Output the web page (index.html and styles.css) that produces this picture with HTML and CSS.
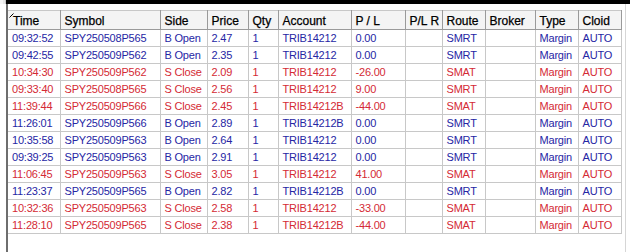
FILE: index.html
```html
<!DOCTYPE html>
<html>
<head>
<meta charset="utf-8">
<link rel="stylesheet" href="styles.css">
</head>
<body>
<div class="topbar"><div class="corner"></div><div class="blackbar"></div></div>
<div class="main">
  <div class="gutter"></div>
  <div class="pane">
    <table class="orders">
      <colgroup>
        <col style="width:52px"><col style="width:100px"><col style="width:47px"><col style="width:41px"><col style="width:30px"><col style="width:73px"><col style="width:54px"><col style="width:37px"><col style="width:43px"><col style="width:50px"><col style="width:43px"><col style="width:43px">
      </colgroup>
      <thead>
        <tr>
          <th class="first"><svg class="mark" width="5" height="5" viewBox="0 0 5 5"><line x1="0.5" y1="4.5" x2="4.5" y2="0.5" stroke="#000" stroke-width="1"/></svg>Time</th>
          <th>Symbol</th><th>Side</th><th>Price</th><th>Qty</th><th>Account</th><th>P / L</th><th>P/L R</th><th>Route</th><th>Broker</th><th>Type</th><th>Cloid</th>
        </tr>
      </thead>
      <tbody>
        <tr class="buy"><td>09:32:52</td><td>SPY250508P565</td><td>B Open</td><td>2.47</td><td>1</td><td>TRIB14212</td><td>0.00</td><td></td><td>SMRT</td><td></td><td>Margin</td><td>AUTO</td></tr>
        <tr class="buy"><td>09:42:55</td><td>SPY250509P562</td><td>B Open</td><td>2.35</td><td>1</td><td>TRIB14212</td><td>0.00</td><td></td><td>SMRT</td><td></td><td>Margin</td><td>AUTO</td></tr>
        <tr class="sell"><td>10:34:30</td><td>SPY250509P562</td><td>S Close</td><td>2.09</td><td>1</td><td>TRIB14212</td><td>-26.00</td><td></td><td>SMAT</td><td></td><td>Margin</td><td>AUTO</td></tr>
        <tr class="sell"><td>09:33:40</td><td>SPY250508P565</td><td>S Close</td><td>2.56</td><td>1</td><td>TRIB14212</td><td>9.00</td><td></td><td>SMRT</td><td></td><td>Margin</td><td>AUTO</td></tr>
        <tr class="sell"><td>11:39:44</td><td>SPY250509P566</td><td>S Close</td><td>2.45</td><td>1</td><td>TRIB14212B</td><td>-44.00</td><td></td><td>SMAT</td><td></td><td>Margin</td><td>AUTO</td></tr>
        <tr class="buy"><td>11:26:01</td><td>SPY250509P566</td><td>B Open</td><td>2.89</td><td>1</td><td>TRIB14212B</td><td>0.00</td><td></td><td>SMRT</td><td></td><td>Margin</td><td>AUTO</td></tr>
        <tr class="buy"><td>10:35:58</td><td>SPY250509P563</td><td>B Open</td><td>2.64</td><td>1</td><td>TRIB14212</td><td>0.00</td><td></td><td>SMRT</td><td></td><td>Margin</td><td>AUTO</td></tr>
        <tr class="buy"><td>09:39:25</td><td>SPY250509P563</td><td>B Open</td><td>2.91</td><td>1</td><td>TRIB14212</td><td>0.00</td><td></td><td>SMRT</td><td></td><td>Margin</td><td>AUTO</td></tr>
        <tr class="sell"><td>11:06:45</td><td>SPY250509P563</td><td>S Close</td><td>3.05</td><td>1</td><td>TRIB14212</td><td>41.00</td><td></td><td>SMAT</td><td></td><td>Margin</td><td>AUTO</td></tr>
        <tr class="buy"><td>11:23:37</td><td>SPY250509P565</td><td>B Open</td><td>2.82</td><td>1</td><td>TRIB14212B</td><td>0.00</td><td></td><td>SMRT</td><td></td><td>Margin</td><td>AUTO</td></tr>
        <tr class="sell"><td>10:32:36</td><td>SPY250509P563</td><td>S Close</td><td>2.58</td><td>1</td><td>TRIB14212</td><td>-33.00</td><td></td><td>SMAT</td><td></td><td>Margin</td><td>AUTO</td></tr>
        <tr class="sell"><td>11:28:10</td><td>SPY250509P565</td><td>S Close</td><td>2.38</td><td>1</td><td>TRIB14212B</td><td>-44.00</td><td></td><td>SMAT</td><td></td><td>Margin</td><td>AUTO</td></tr>
      </tbody>
    </table>
  </div>
  <div class="rightedge"></div>
</div>
</body>
</html>
```
FILE: styles.css
```css
html, body {
  margin: 0;
  padding: 0;
  background: #ffffff;
  width: 630px;
  height: 252px;
  overflow: hidden;
}
.topbar {
  display: flex;
  height: 4px;
}
.corner {
  width: 6px;
  background: #e6e6e6;
  box-sizing: border-box;
  border-left: 3px solid #f4f4f4;
  border-right: 1px solid #c8c8c8;
}
.blackbar {
  flex: 1;
  background: #000000;
}
.main {
  display: flex;
  height: 248px;
}
.gutter {
  width: 6px;
  background: #ffffff;
}
.pane {
  width: 619px;
  box-sizing: border-box;
  border-left: 2px solid #6e6e6e;
  padding-top: 6px;
}
.rightedge {
  width: 5px;
  box-sizing: border-box;
  border-left: 1px solid #d6d6d6;
}
.orders {
  border-collapse: collapse;
  table-layout: fixed;
  width: 613px;
  font-family: "Liberation Sans", Arial, sans-serif;
  font-size: 11px;
  letter-spacing: -0.2px;
}
.orders th {
  height: 19px;
  padding: 2px 0 0 4px;
  box-sizing: border-box;
  text-align: left;
  font-family: "Liberation Sans", Arial, sans-serif;
  font-size: 12px;
  letter-spacing: 0;
  font-weight: normal;
  color: #000;
  background: #f4f4f4;
  border-top: 1px solid #c8c8c8;
  border-right: 1px solid #9a9a9a;
  border-bottom: 1px solid #9a9a9a;
  border-left: 1px solid #ffffff;
  white-space: nowrap;
  overflow: hidden;
  position: relative;
  -webkit-text-stroke: 0.25px #000;
}
.orders th.first {
  border-left: none;
  padding-left: 5px;
}
.mark {
  position: absolute;
  left: 1px;
  top: 2px;
}
.orders td {
  height: 17px;
  padding: 0 0 0 4px;
  box-sizing: border-box;
  border: 1px solid #c8c8c8;
  white-space: nowrap;
  overflow: hidden;
  line-height: 15px;
}
.orders td:first-child {
  border-left: none;
}
.buy td {
  color: #2626a4;
}
.sell td {
  color: #d42a35;
}
```
